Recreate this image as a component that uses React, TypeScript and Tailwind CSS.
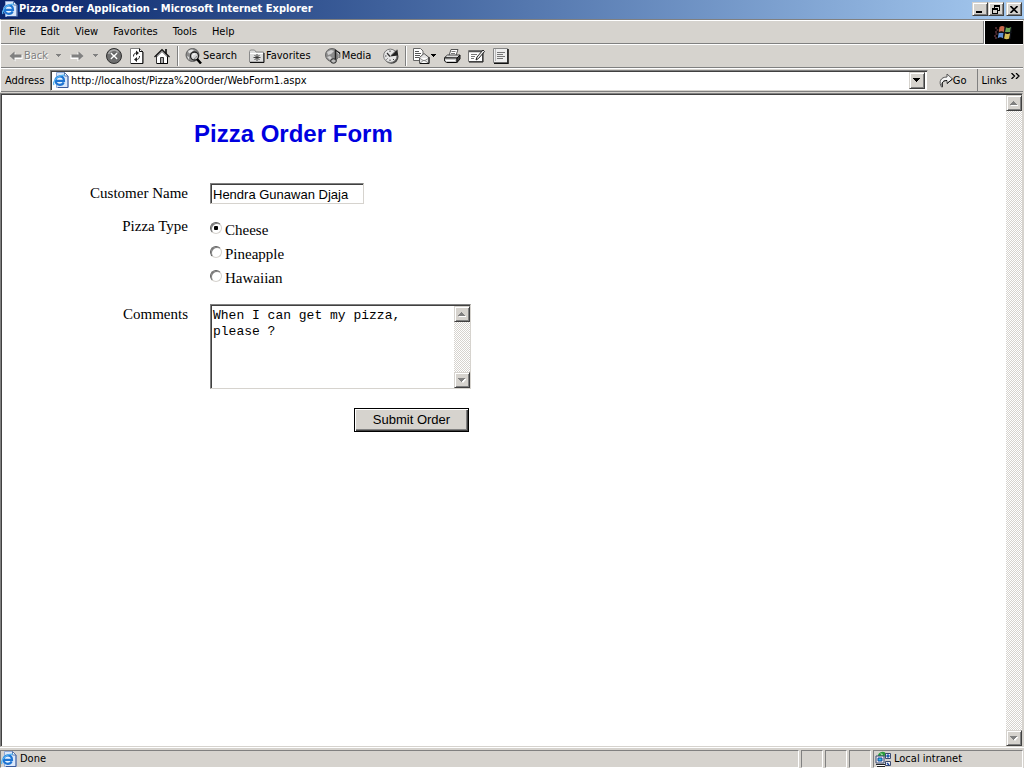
import React, { useState } from "react";

const ui = "font-['DejaVu_Sans_Condensed','DejaVu_Sans',sans-serif]";
const raised =
  "border border-t-[#d6d3ce] border-l-[#d6d3ce] border-r-[#404040] border-b-[#404040] bg-[#d6d3ce] shadow-[inset_1px_1px_0_#fff,inset_-1px_-1px_0_#808080]";
const sunken =
  "border border-t-[#808080] border-l-[#808080] border-r-[#d6d3ce] border-b-[#d6d3ce] bg-white shadow-[inset_1px_1px_0_#404040]";
const dither =
  "bg-[repeating-conic-gradient(#ffffff_0_25%,#d6d3ce_0_50%)] bg-size-[2px_2px]";

function PageIcon() {
  return (
    <svg width="16" height="16" viewBox="0 0 16 16" className="shrink-0" aria-hidden="true">
      <path d="M3.500.5h8l3.500 3.500v11.500h-11.500z" fill="#dbe8fa" stroke="#8fa9d6" />
      <path d="M15 4v11.500H5" fill="none" stroke="#3a5a9c" />
      <path d="M11.500.5v3.500h3.500z" fill="#fff" stroke="#5573a8" />
      <circle cx="6.800" cy="8.500" r="5.600" fill="#e8f4ff" />
      <path d="M2.800 8.800h8.200C11 6 9.300 4.300 6.900 4.300 4.400 4.300 2.500 6.100 2.500 8.600s1.900 4.200 4.300 4.200c1.900 0 3.300-.9 3.900-2.500" fill="none" stroke="#1f74d2" strokeWidth="2.200" />
      <path d="M1 13C-1 9.500 5 2.800 12 3.200" fill="none" stroke="#54b4f2" strokeWidth="1.200" />
    </svg>
  );
}

function BackArrow({ flip = false }: { flip?: boolean }) {
  return (
    <svg width="14" height="12" viewBox="0 0 14 12" className={flip ? "-scale-x-100 shrink-0" : "shrink-0"} aria-hidden="true">
      <path d="M1.500 7l5-4.500V5h7v4h-7v2.500z" fill="#fff" />
      <path d="M.5 6l5-4.500V4.500h7v3h-7v3z" fill="#808080" />
    </svg>
  );
}

function Caret({ color = "#000" }: { color?: string }) {
  return (
    <svg width="7" height="4" viewBox="0 0 7 4" className="shrink-0" aria-hidden="true">
      <path d="M1 0h5v1H5v1H4v1H3V2H2V1H1z" fill={color} />
    </svg>
  );
}

function StopIcon() {
  return (
    <svg width="16" height="16" viewBox="0 0 16 16" aria-hidden="true">
      <circle cx="8" cy="8" r="7.500" fill="#6e6e6e" stroke="#303030" />
      <path d="M2.500 6C4 1.500 10 .8 12.500 4.500" fill="none" stroke="#a9a9a9" strokeWidth="1.500" />
      <path d="M5 5l6 6M11 5l-6 6" stroke="#fff" strokeWidth="1.700" />
      <path d="M6 4.500l2 2 2-2M6 11.500l2-2 2 2" fill="none" stroke="#333" strokeWidth=".6" />
    </svg>
  );
}

function RefreshIcon() {
  return (
    <svg width="14" height="16" viewBox="0 0 14 16" aria-hidden="true">
      <path d="M.5.5h9l3 3v12H.5z" fill="#fff" stroke="#808080" />
      <path d="M13 4v11.500H1M9.500.5v3h3.500" fill="none" stroke="#111" />
      <path d="M3.500 8.500c0-2.500 1-3.500 3.500-3.500M9.500 8c0 2.500-1 3.500-3.500 3.500" fill="none" stroke="#222" />
      <path d="M6 2.500L9 5 6 7.500zM7 9l-3 2.500L7 14z" fill="#222" />
    </svg>
  );
}

function HomeIcon() {
  return (
    <svg width="16" height="16" viewBox="0 0 16 16" aria-hidden="true">
      <path d="M11 1h2v5h-2z" fill="#333" />
      <path d="M2.500 8v7.500h11V8L8 2.500z" fill="#fff" stroke="#333" />
      <path d="M.5 9L8 1.500 15.500 9" fill="none" stroke="#111" strokeWidth="1.200" />
      <path d="M3 9l5-5 5 5" fill="none" stroke="#aaa" />
      <path d="M6.500 15V9.500h3V15" fill="#aaa" stroke="#333" />
      <path d="M13.500 9v6.500H3" fill="none" stroke="#000" />
    </svg>
  );
}

function SearchIcon() {
  return (
    <svg width="17" height="16" viewBox="0 0 17 16" aria-hidden="true">
      <circle cx="7.500" cy="7" r="6.500" fill="#8c8c8c" stroke="#606060" />
      <path d="M3 3l3-1.500 3 .5-2 2-3 1.500zM2 8l2 1v3z" fill="#e3e3e3" />
      <circle cx="9.500" cy="8" r="4" fill="#d8d8d8" stroke="#222" strokeWidth="1.300" />
      <path d="M7.500 8.500c0-1.700 1-2.500 2.500-2.500" fill="none" stroke="#fff" />
      <path d="M9 10.500c1.500 0 2.500-1 2.500-2.500" fill="none" stroke="#888" />
      <path d="M12 11l4 4.500" stroke="#000" strokeWidth="2.500" />
    </svg>
  );
}

function FavoritesIcon() {
  return (
    <svg width="16" height="14" viewBox="0 0 16 14" aria-hidden="true">
      <path d="M.5 13V2.500l1-1.500h4l1.500 2h7.500v10z" fill="#dedede" stroke="#8a8a8a" />
      <path d="M15 4v9.500H1" fill="none" stroke="#111" />
      <path d="M1 4.500h13" stroke="#fff" />
      <path d="M8 5v7M4.500 8.500h7M5.500 6l5 5M10.500 6l-5 5" stroke="#333" strokeWidth=".9" />
    </svg>
  );
}

function MediaIcon() {
  return (
    <svg width="17" height="16" viewBox="0 0 17 16" aria-hidden="true">
      <circle cx="7" cy="7" r="6.500" fill="#8c8c8c" stroke="#666" />
      <path d="M2 4l4-2 3 1-3 3-3 1zM2 9l3-1 2 2-2 2z" fill="#d0d0d0" />
      <path d="M10.500 13V2.500l4 2.500V9.500" fill="none" stroke="#222" strokeWidth="1.500" />
      <path d="M11.500 4l2.500 2v3" fill="none" stroke="#eee" strokeWidth=".9" />
      <ellipse cx="8.500" cy="13" rx="2.800" ry="2.200" fill="#bbb" stroke="#222" />
    </svg>
  );
}

function HistoryIcon() {
  return (
    <svg width="16" height="16" viewBox="0 0 16 16" aria-hidden="true">
      <circle cx="8.500" cy="8.700" r="7" fill="#444" />
      <circle cx="7.300" cy="7.800" r="6.700" fill="#e6e6e6" stroke="#777" />
      <path d="M7 2.500V4M7 11.500V13M2 8h1.500M3.500 11.500l1-1M11 12l-1-1" stroke="#444" />
      <path d="M7 8.500L14.500 1.500l.5 6z" fill="#222" />
      <path d="M4 5L7 8.500" fill="none" stroke="#333" strokeWidth="1.200" />
      <path d="M8 7l5.500-5.500" stroke="#999" strokeWidth=".8" />
    </svg>
  );
}

function MailIcon() {
  return (
    <svg width="17" height="16" viewBox="0 0 17 16" aria-hidden="true">
      <path d="M.5.5h7l2.500 2.500v9.500H.5z" fill="#fff" stroke="#666" />
      <path d="M2 3.500h4M2 5.500h6M2 7.500h5M2 9.500h4" stroke="#555" />
      <path d="M6.500 9.500l4.500-4 5 4v6H6.500z" fill="#e5e5e5" stroke="#555" />
      <path d="M6.500 15.500l4.500-3.500 5 3.500M6.500 10l4.500 3 5-3" fill="#fff" stroke="#777" strokeWidth=".8" />
      <path d="M16 9v6.500H7" fill="none" stroke="#111" />
    </svg>
  );
}

function PrintIcon() {
  return (
    <svg width="17" height="15" viewBox="0 0 17 15" aria-hidden="true">
      <path d="M5 6.500l2-6h7l-2 6z" fill="#fff" stroke="#555" />
      <path d="M7.500 2.500h4M7 4.500h4" stroke="#777" />
      <path d="M.5 8.500l3-2.500H16l-2.500 3z" fill="#ddd" stroke="#444" />
      <path d="M.5 9h12.500v4.500H2.500L.5 12z" fill="#ccc" stroke="#222" />
      <path d="M13 13.500L16 10V6l-3 3z" fill="#444" stroke="#111" />
      <path d="M2 11.500h9" stroke="#fff" />
      <path d="M3 13.500h9" stroke="#000" />
    </svg>
  );
}

function EditIcon() {
  return (
    <svg width="17" height="14" viewBox="0 0 17 14" aria-hidden="true">
      <path d="M.5 1.500h14v11H.5z" fill="#fff" stroke="#777" />
      <path d="M1 2.500h13" stroke="#555" strokeWidth="1.500" />
      <path d="M15 3v10H1" fill="none" stroke="#111" />
      <path d="M3 5.500h6M3 7.500h4M3 9.500h3" stroke="#777" />
      <path d="M8 11l1-3 6-7 1.500 1.500-6 7z" fill="#eee" stroke="#222" />
    </svg>
  );
}

function DiscussIcon() {
  return (
    <svg width="16" height="16" viewBox="0 0 16 16" aria-hidden="true">
      <path d="M.5.500h14v14H.5z" fill="#eee" stroke="#888" />
      <path d="M15 1v14.500H1" fill="none" stroke="#111" strokeWidth="1.500" />
      <path d="M2.500 1v12" stroke="#bbb" />
      <path d="M4 4.500h8M4 6.500h6M4 8.500h8M4 10.500h6" stroke="#777" />
    </svg>
  );
}

function GoIcon() {
  return (
    <svg width="14" height="15" viewBox="0 0 14 15" aria-hidden="true">
      <path d="M2.500 14C-.5 9 1.500 4 8 4V1l5.500 5L8 10.500V7.500c-4 0-6 2-4.500 6.500z" fill="#f5f5f5" stroke="#555" />
      <path d="M8 10.500L13.500 6M3.500 13.500C2.500 9.500 4 7.500 8 7.500" fill="none" stroke="#111" />
    </svg>
  );
}

function FlagIcon() {
  return (
    <svg width="20" height="18" viewBox="0 0 20 18" aria-hidden="true">
      <path d="M5.500 3q2.800-2 5.300 0l-.8 5q-2.600-1.500-5.200 0z" fill="#c9684c" />
      <path d="M11.800 3.200q2.700 1.500 5.200-.2l-.8 5.200q-2.600 1.500-5.200.2z" fill="#6aa456" />
      <path d="M4.700 9q2.400-1.500 5 0l-.8 5.200q-2.600-1.700-5.200 0z" fill="#5f90d4" />
      <path d="M10.900 9.300q2.600 1.400 5.200 0l-.8 5.200q-2.600 1.400-5.200 0z" fill="#d6bd55" />
      <path d="M1 4h2M2.500 6h2M1 8h2M1.500 10h2M0 12h2M1 14h2" stroke="#8a4c58" />
      <path d="M11.200 2.500l-2 13M4 8.500h13.500M17.500 3l-1.500 12" fill="none" stroke="#10141c" />
    </svg>
  );
}

function IntranetIcon() {
  return (
    <svg width="17" height="16" viewBox="0 0 17 16" aria-hidden="true">
      <path d="M3 4c2-4 7-4 8-1l-2 3H3z" fill="#2a9b3a" />
      <path d="M5 2l3 1-1 2z" fill="#a8e0b0" />
      <path d="M1 5h8v7H1zM10.500 2.500h5v5h-5zM10.500 10.500h5v4h-5z" fill="#f0f0f0" stroke="#3a4a70" />
      <path d="M3 7h4v3H3zM12 4h2v2h-2z" fill="#25c5e8" stroke="#1743a0" />
      <path d="M1 13.500h9M2 15.500h8" stroke="#222" />
      <path d="M1.500 14.500h8" stroke="#fff" />
      <path d="M12 12l2 2" stroke="#1743a0" strokeWidth="1.500" />
    </svg>
  );
}

function ScrollArrow({ down = false, label }: { down?: boolean; label: string }) {
  return (
    <button type="button" aria-label={label} className={`flex h-4 w-4 shrink-0 items-center justify-center ${raised}`}>
      <svg width="8" height="5" viewBox="0 0 8 5" aria-hidden="true">
        {down ? (
          <>
            <path d="M1.500 1h7L5 5z" fill="#fff" />
            <path d="M0 0h7v1H6v1H5v1H4v1H3V3H2V2H1V1H0z" fill="#808080" />
          </>
        ) : (
          <>
            <path d="M1 4h7v1H1z" fill="#fff" />
            <path d="M0 4h7V3H6V2H5V1H4V0H3v1H2v1H1v1H0z" fill="#808080" />
          </>
        )}
      </svg>
    </button>
  );
}

function ScrollColumn({ name }: { name: string }) {
  return (
    <div className={`flex w-4 shrink-0 flex-col justify-between ${dither}`}>
      <ScrollArrow label={`Scroll ${name} up`} />
      <ScrollArrow down label={`Scroll ${name} down`} />
    </div>
  );
}

function Separator() {
  return <div className="mx-1 h-5 w-0.5 shrink-0 border-l border-l-[#808080] border-r border-r-white" />;
}

function ToolButton({ label, children, className = "" }: { label: string; children: React.ReactNode; className?: string }) {
  return (
    <button type="button" aria-label={label} className={`flex h-5 shrink-0 items-center ${className}`}>
      {children}
    </button>
  );
}

function TitleBar() {
  const btn = `flex h-3.5 w-4 items-center justify-center ${raised}`;
  return (
    <header className="flex h-[19px] items-center bg-linear-to-r from-[#0a246a] to-[#a6caf0] pb-px pl-0.5 pr-0.5">
      <PageIcon />
      <h1 className="flex-1 pl-px text-[11px] leading-4 font-bold text-white">Pizza Order Application - Microsoft Internet Explorer</h1>
      <button type="button" aria-label="Minimize" className={btn}>
        <svg width="8" height="8" viewBox="0 0 8 8" aria-hidden="true"><path d="M0 6h6v2H0z" /></svg>
      </button>
      <button type="button" aria-label="Restore" className={btn}>
        <svg width="8" height="9" viewBox="0 0 8 9" aria-hidden="true">
          <path d="M2 0h6v6H6V5h1V2H3v1H2z" />
          <path d="M0 3h6v6H0zM1 5v3h4V5z" fillRule="evenodd" />
        </svg>
      </button>
      <button type="button" aria-label="Close" className={`ml-0.5 ${btn}`}>
        <svg width="8" height="7" viewBox="0 0 8 7" aria-hidden="true"><path d="M.5 0l7 7M7.500 0l-7 7" stroke="#000" strokeWidth="1.600" /></svg>
      </button>
    </header>
  );
}

const menus = ["File", "Edit", "View", "Favorites", "Tools", "Help"];

function MenuBar() {
  return (
    <div className="flex h-6 border-t border-t-white">
      <nav className="flex flex-1 items-center gap-[15px] border-b border-b-[#808080] border-r border-r-[#808080] pl-2">
        {menus.map((m) => (
          <button key={m} type="button">{m}</button>
        ))}
      </nav>
      <div className="flex w-[39px] items-center justify-center border-l border-l-white bg-black">
        <FlagIcon />
      </div>
    </div>
  );
}

function Toolbar() {
  return (
    <div className="flex h-6 items-center border-t border-t-white border-b border-b-[#808080] pl-2">
      <ToolButton label="Back" className="gap-px text-[#808080] [text-shadow:1px_1px_0_#fff]">
        <BackArrow />
        <span>Back</span>
      </ToolButton>
      <ToolButton label="Back history" className="ml-[7px]"><Caret color="#808080" /></ToolButton>
      <ToolButton label="Forward" className="ml-2"><BackArrow flip /></ToolButton>
      <ToolButton label="Forward history" className="ml-2"><Caret color="#808080" /></ToolButton>
      <ToolButton label="Stop" className="ml-[7px]"><StopIcon /></ToolButton>
      <ToolButton label="Refresh" className="ml-2"><RefreshIcon /></ToolButton>
      <ToolButton label="Home" className="ml-2.5 mr-[3px]"><HomeIcon /></ToolButton>
      <Separator />
      <ToolButton label="Search" className="ml-0.5 gap-px"><SearchIcon /><span>Search</span></ToolButton>
      <ToolButton label="Favorites" className="ml-3 gap-px"><FavoritesIcon /><span>Favorites</span></ToolButton>
      <ToolButton label="Media" className="ml-3.5"><MediaIcon /><span>Media</span></ToolButton>
      <ToolButton label="History" className="ml-3 mr-0.5"><HistoryIcon /></ToolButton>
      <Separator />
      <ToolButton label="Mail" className="ml-0.5"><MailIcon /><Caret /></ToolButton>
      <ToolButton label="Print" className="ml-[7px]"><PrintIcon /></ToolButton>
      <ToolButton label="Edit page" className="ml-[7px]"><EditIcon /></ToolButton>
      <ToolButton label="Discuss" className="ml-2"><DiscussIcon /></ToolButton>
    </div>
  );
}

function AddressBar() {
  const [url, setUrl] = useState("http://localhost/Pizza%20Order/WebForm1.aspx");
  return (
    <div className="flex h-6 items-center border-t border-t-white border-b border-b-[#808080] pl-1">
      <label htmlFor="address" className="w-[45px] pt-px">Address</label>
      <div className={`flex h-[21px] flex-1 items-center p-0.5 ${sunken}`}>
        <PageIcon />
        <input id="address" type="text" value={url} onChange={(e) => setUrl(e.target.value)} className="h-4 min-w-0 flex-1 pt-0.5 pl-0.5 outline-none" />
        <button type="button" aria-label="Show addresses" className={`flex h-[17px] w-4 items-center justify-center ${raised}`}>
          <svg width="7" height="4" viewBox="0 0 7 4" aria-hidden="true"><path d="M0 0h7v1H6v1H5v1H4v1H3V3H2V2H1V1H0z" /></svg>
        </button>
      </div>
      <button type="button" className="ml-[11px] flex items-center pt-px"><GoIcon /><span>Go</span></button>
      <div className="ml-2.5 flex h-[22px] items-center gap-1 border-l border-l-[#808080] pl-1 pr-[3px]">
        <a href="#links" className="pt-px">Links</a>
        <svg width="9" height="6" viewBox="0 0 9 6" className="mb-2" aria-hidden="true">
          <path d="M.5 0L3.500 3l-3 3M5 0l3 3-3 3" fill="none" stroke="#000" strokeWidth="1.300" />
        </svg>
      </div>
    </div>
  );
}

const pizzas = ["Cheese", "Pineapple", "Hawaiian"];

function OrderForm() {
  const [name, setName] = useState("Hendra Gunawan Djaja");
  const [pizza, setPizza] = useState("Cheese");
  const [comments, setComments] = useState("When I can get my pizza, please ?");
  return (
    <form onSubmit={(e) => e.preventDefault()} className="flex-1 pt-[23px] font-['Liberation_Serif',serif] text-[15px] text-black">
      <h2 className="mb-[33px] pl-48 font-['Liberation_Sans',sans-serif] text-2xl leading-8 font-bold text-[#0000e0]">Pizza Order Form</h2>
      <div className="grid grid-cols-[186px_261px] gap-x-[22px] gap-y-3.5">
        <label htmlFor="name" className="text-right leading-5">Customer Name</label>
        <input id="name" type="text" value={name} onChange={(e) => setName(e.target.value)} className={`h-[21px] w-[154px] px-0.5 pt-0.5 font-['Liberation_Sans',sans-serif] text-[13px] outline-none ${sunken}`} />
        <span id="type" className="text-right leading-4">Pizza Type</span>
        <div role="radiogroup" aria-labelledby="type">
          {pizzas.map((p) => (
            <label key={p} className="flex h-6 gap-[3px] leading-6">
              <input
                type="radio"
                name="pizza"
                checked={pizza === p}
                onChange={() => setPizza(p)}
                className="mt-1 h-3 w-3 appearance-none rounded-full border border-t-[#606060] border-l-[#606060] border-r-[#d6d3ce] border-b-[#d6d3ce] bg-white shadow-[inset_1px_1px_0_#808080] checked:bg-[radial-gradient(circle,#000_0_2px,#fff_2.500px)]"
              />
              <span>{p}</span>
            </label>
          ))}
        </div>
        <label htmlFor="comments" className="text-right leading-5">Comments</label>
        <div className={`flex h-[85px] pt-px pl-px ${sunken}`}>
          <textarea id="comments" value={comments} onChange={(e) => setComments(e.target.value)} className="min-w-0 flex-1 resize-none overflow-hidden px-px pt-0.5 font-['Liberation_Mono',monospace] text-[13px] leading-4 outline-none" />
          <ScrollColumn name="comments" />
        </div>
        <button type="submit" className="col-start-2 mt-[5px] mr-0.5 h-6 w-[115px] justify-self-end border border-black bg-[#d6d3ce] font-['Liberation_Sans',sans-serif] text-[13px] shadow-[inset_1px_1px_0_#fff,inset_-1px_-1px_0_#404040,inset_-2px_-2px_0_#808080]">
          Submit Order
        </button>
      </div>
    </form>
  );
}

function StatusBar() {
  const pane = "border border-t-[#808080] border-l-[#808080] border-r-white border-b-white";
  return (
    <footer className="flex h-[21px] gap-0.5 border-t border-t-white pt-0.5 pr-px">
      <div className={`flex flex-1 items-center gap-[3px] ${pane}`}><PageIcon /><span>Done</span></div>
      <div className={`w-[22px] ${pane}`} />
      <div className={`w-[22px] ${pane}`} />
      <div className={`w-[22px] ${pane}`} />
      <div className={`flex w-[150px] items-center gap-0.5 pl-px ${pane}`}><IntranetIcon /><span>Local intranet</span></div>
    </footer>
  );
}

export default function App() {
  return (
    <div className={`flex h-screen flex-col bg-[#d6d3ce] text-[11px] leading-4 text-black ${ui}`}>
      <TitleBar />
      <div className="border-t border-t-[#808080] border-l border-l-white pr-px">
        <MenuBar />
        <Toolbar />
        <AddressBar />
      </div>
      <main className={`mt-px mr-px flex min-h-0 flex-1 pt-px pl-px ${sunken}`}>
        <OrderForm />
        <ScrollColumn name="page" />
      </main>
      <StatusBar />
    </div>
  );
}
